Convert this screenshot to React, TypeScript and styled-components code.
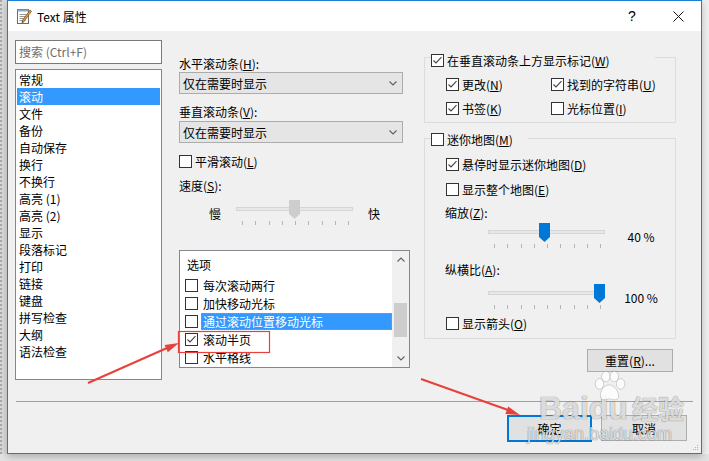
import React from 'react';
import styled, { createGlobalStyle } from 'styled-components';

const GlobalStyle = createGlobalStyle`
  html, body {
    margin: 0;
    padding: 0;
  }
  body {
    background: #e3e3e3;
    font-family: 'Noto Sans CJK SC', 'Noto Sans', sans-serif;
    font-size: 12px;
    color: #000;
    overflow: hidden;
  }
`;

const Screen = styled.div`
  position: relative;
  width: 709px;
  height: 461px;
  display: flex;
  align-items: flex-start;
  background: #e2e2e2;
  overflow: hidden;
`;

const SideStrip = styled.div<{ $right?: boolean }>`
  width: 7px;
  height: 454px;
  flex: none;
  box-sizing: border-box;
  background: ${(p) => (p.$right ? '#eeeeee' : '#d9d9d9')};
  border-left: ${(p) => (p.$right ? 'none' : '2px dotted #a8a8a8')};
`;

const Window = styled.div`
  position: relative;
  width: 695px;
  height: 454px;
  flex: none;
  box-sizing: border-box;
  border: 1px solid #1a7fd5;
  background: #f0f0f0;
  display: flex;
  flex-direction: column;
  box-shadow: 0 3px 7px rgba(0, 0, 0, 0.22);
  overflow: hidden;
`;

const TitleBar = styled.div`
  height: 30px;
  flex: none;
  background: #fff;
  display: flex;
  align-items: center;
`;

const TitleIcon = styled.svg`
  margin-left: 8px;
  flex: none;
`;

const TitleText = styled.div`
  margin-left: 5px;
  font-size: 12px;
  line-height: 17px;
  flex: 1;
`;

const TitleButton = styled.div`
  width: 46px;
  height: 30px;
  display: flex;
  align-items: center;
  justify-content: center;
  font-size: 14px;
  font-family: 'Liberation Sans', sans-serif;
`;

const Main = styled.div`
  height: 370px;
  box-sizing: border-box;
  padding: 9px 0 0 7px;
  display: flex;
  align-items: flex-start;
`;

const LeftCol = styled.div`
  width: 147px;
  flex: none;
  display: flex;
  flex-direction: column;
`;

const MidCol = styled.div`
  width: 231px;
  margin-left: 17px;
  flex: none;
  display: flex;
  flex-direction: column;
`;

const RightCol = styled.div`
  width: 252px;
  margin-left: 14px;
  flex: none;
  display: flex;
  flex-direction: column;
`;

const SearchBox = styled.div`
  height: 24px;
  box-sizing: border-box;
  border: 1px solid #7a7a7a;
  background: #fff;
  color: #6d6d6d;
  padding-left: 3px;
  line-height: 21px;
`;

const PageList = styled.div`
  margin-top: 5px;
  height: 311px;
  box-sizing: border-box;
  border: 1px solid #828790;
  background: #fff;
  padding: 1px;
`;

const PageItem = styled.div<{ $sel?: boolean }>`
  height: 17px;
  line-height: 17px;
  padding-left: 2px;
  background: ${(p) => (p.$sel ? '#3399ff' : 'transparent')};
  color: ${(p) => (p.$sel ? '#fff' : '#000')};
`;

const Label = styled.div<{ $mt?: number; $ml?: number }>`
  margin-top: ${(p) => p.$mt ?? 0}px;
  margin-left: ${(p) => p.$ml ?? 0}px;
  line-height: 17px;
  height: 17px;
  white-space: nowrap;
`;

const Key = styled.span`
  text-decoration: underline;
  text-underline-offset: 1px;
`;

const Combo = styled.div<{ $mt?: number }>`
  margin-top: ${(p) => p.$mt ?? 0}px;
  width: 224px;
  height: 22px;
  box-sizing: border-box;
  border: 1px solid #acacac;
  background: #e5e5e5;
  padding: 0 5px 0 3px;
  display: flex;
  align-items: center;
  justify-content: space-between;
`;

const CheckRow = styled.div<{ $mt?: number; $ml?: number }>`
  margin-top: ${(p) => p.$mt ?? 0}px;
  margin-left: ${(p) => p.$ml ?? 0}px;
  height: 17px;
  display: flex;
  align-items: center;
  gap: 3px;
  white-space: nowrap;
`;

const CheckBox = styled.span`
  width: 13px;
  height: 13px;
  flex: none;
  box-sizing: border-box;
  border: 1px solid #333;
  background: #fff;
  display: inline-flex;
  align-items: center;
  justify-content: center;
`;

const SliderRow = styled.div<{ $mt?: number; $ml?: number }>`
  margin-top: ${(p) => p.$mt ?? 0}px;
  margin-left: ${(p) => p.$ml ?? 0}px;
  height: 26px;
  display: flex;
  align-items: center;
`;

const SliderEnd = styled.span<{ $gap: number }>`
  line-height: 17px;
  margin: 0 ${(p) => p.$gap}px;
`;

const SliderBox = styled.div`
  position: relative;
  width: 117px;
  height: 26px;
  flex: none;
`;

const Track = styled.div`
  position: absolute;
  left: 0;
  right: 0;
  top: 7px;
  height: 4px;
  box-sizing: border-box;
  border: 1px solid #d6d6d6;
  background: #e7e7e7;
`;

const Thumb = styled.div<{ $blue?: boolean }>`
  position: absolute;
  top: 0;
  width: 11px;
  height: 19px;
  background: ${(p) => (p.$blue ? '#0078d7' : '#cdcdcd')};
  clip-path: polygon(0 0, 100% 0, 100% 74%, 50% 100%, 0 74%);
`;

const Ticks = styled.div`
  position: absolute;
  left: 0;
  right: 0;
  top: 21px;
  height: 4px;
  box-sizing: border-box;
  padding: 0 4px 0 6px;
  display: flex;
  justify-content: space-between;
`;

const Tick = styled.span`
  width: 1px;
  height: 4px;
  background: #b4b4b4;
`;

const SliderValue = styled.span`
  width: 50px;
  margin-left: 11px;
  text-align: center;
  line-height: 17px;
`;

const OptionsBox = styled.div`
  margin-top: 24px;
  width: 231px;
  height: 118px;
  box-sizing: border-box;
  border: 1px solid #828790;
  background: #fff;
  display: flex;
`;

const OptionsBody = styled.div`
  flex: 1;
  display: flex;
  flex-direction: column;
`;

const OptionsHeader = styled.div`
  margin: 5px 0 3px 7px;
  line-height: 17px;
`;

const OptionRow = styled.div`
  height: 18px;
  display: flex;
  align-items: center;
  padding-left: 5px;
`;

const OptionText = styled.span<{ $sel?: boolean }>`
  flex: 1;
  margin-left: 3px;
  padding-left: 2px;
  height: 17px;
  line-height: 17px;
  white-space: nowrap;
  background: ${(p) => (p.$sel ? '#3399ff' : 'transparent')};
  color: ${(p) => (p.$sel ? '#fff' : '#000')};
  outline: ${(p) => (p.$sel ? '1px dotted #e58b1c' : 'none')};
  outline-offset: -1px;
`;

const ScrollBar = styled.div`
  width: 17px;
  flex: none;
  background: #f0f0f0;
  display: flex;
  flex-direction: column;
`;

const ScrollArrow = styled.div`
  height: 17px;
  display: flex;
  align-items: center;
  justify-content: center;
`;

const ScrollTrack = styled.div`
  flex: 1;
`;

const ScrollThumb = styled.div`
  margin: 35px 2px 0;
  height: 34px;
  background: #cdcdcd;
`;

const Group = styled.fieldset<{ $mt: number; $pb: number }>`
  margin: ${(p) => p.$mt}px 0 0;
  padding: 0 0 ${(p) => p.$pb}px;
  min-width: 0;
  width: 100%;
  box-sizing: border-box;
  border: 1px solid #dcdcdc;
  display: flex;
  flex-direction: column;
`;

const GroupHeader = styled.legend<{ $w: number; $pt: number }>`
  margin-left: 6px;
  padding: ${(p) => p.$pt}px 0 0;
  width: ${(p) => p.$w}px;
  box-sizing: border-box;
  height: ${(p) => p.$pt + 17}px;
  display: flex;
  align-items: center;
  gap: 3px;
  white-space: nowrap;
`;

const MarkGrid = styled.div`
  margin: 7px 0 0 21px;
  display: grid;
  grid-template-columns: 105px auto;
  row-gap: 7px;
`;

const Button = styled.div<{ $primary?: boolean; $w?: number }>`
  width: ${(p) => p.$w ?? 85}px;
  height: ${(p) => (p.$primary ? 27 : 26)}px;
  box-sizing: border-box;
  background: #e1e1e1;
  border: ${(p) => (p.$primary ? '2px solid #0078d7' : '1px solid #adadad')};
  display: flex;
  align-items: center;
  justify-content: center;
  line-height: 17px;
`;

const ResetButton = styled(Button)`
  height: 23px;
  margin-top: 10px;
  align-self: flex-end;
  margin-right: 3px;
`;

const Separator = styled.div`
  height: 1px;
  margin: 0 8px;
  background: #a0a0a0;
  flex: none;
`;

const Footer = styled.div`
  display: flex;
  justify-content: flex-end;
  gap: 9px;
  padding: 13px 14px 0 0;
`;

const Grip = styled.svg`
  position: absolute;
  right: 2px;
  bottom: 2px;
`;

const Overlay = styled.svg`
  position: absolute;
  left: 0;
  top: 0;
  pointer-events: none;
`;

const Watermark = styled.div`
  position: absolute;
  left: 527px;
  top: 378px;
  width: 175px;
  color: rgba(255, 255, 255, 0.8);
  text-shadow: 0 0 1px rgba(0, 0, 0, 0.45), 0 0 1px rgba(0, 0, 0, 0.3);
  pointer-events: none;
  display: flex;
  flex-direction: column;
`;

const WmTop = styled.div`
  display: flex;
  align-items: flex-end;
  padding-left: 12px;
  height: 46px;
`;

const WmBaidu = styled.span`
  font-family: 'Liberation Sans', sans-serif;
  font-weight: bold;
  font-size: 32px;
  line-height: 32px;
  position: relative;
`;

const WmJy = styled.span`
  font-family: 'Noto Sans CJK SC', sans-serif;
  font-weight: bold;
  font-size: 26px;
  line-height: 32px;
  margin-left: 4px;
`;

const WmUrl = styled.span`
  font-family: 'Liberation Sans', sans-serif;
  font-size: 18px;
  line-height: 20px;
`;

const Chevron = ({ up }: { up?: boolean }) => (
  <svg width="8" height="5" viewBox="0 0 8 5">
    <path
      d={up ? 'M0.5 4.5 L4 1 L7.5 4.5' : 'M0.5 0.5 L4 4 L7.5 0.5'}
      fill="none"
      stroke="#606060"
      strokeWidth="1.1"
    />
  </svg>
);

const Check = ({ on }: { on?: boolean }) => (
  <CheckBox>
    {on && (
      <svg width="11" height="11" viewBox="0 0 11 11">
        <path d="M1.5 5.5 L4 8 L9.5 2.2" fill="none" stroke="#444" strokeWidth="1.1" />
      </svg>
    )}
  </CheckBox>
);

const Slider = ({ value, blue }: { value: number; blue?: boolean }) => (
  <SliderBox>
    <Track />
    <Thumb $blue={blue} style={{ left: Math.round(value * 106) }} />
    <Ticks>
      {Array.from({ length: 9 }).map((_, i) => (
        <Tick key={i} />
      ))}
    </Ticks>
  </SliderBox>
);

const pages = [
  '常规',
  '滚动',
  '文件',
  '备份',
  '自动保存',
  '换行',
  '不换行',
  '高亮 (1)',
  '高亮 (2)',
  '显示',
  '段落标记',
  '打印',
  '链接',
  '键盘',
  '拼写检查',
  '大纲',
  '语法检查',
];

const options = [
  { text: '每次滚动两行', on: false },
  { text: '加快移动光标', on: false },
  { text: '通过滚动位置移动光标', on: false, sel: true },
  { text: '滚动半页', on: true },
  { text: '水平格线', on: false },
];

const App = () => {
  return (
    <>
      <GlobalStyle />
      <Screen>
        <SideStrip />
        <Window>
          <TitleBar>
            <TitleIcon width="16" height="18" viewBox="0 0 16 18">
              <rect x="1.5" y="2.5" width="11" height="14" fill="#fff" stroke="#6b6b6b" />
              <rect x="1.5" y="2.5" width="11" height="2" fill="#8aa8c8" />
              <path d="M3.5 7.5h7M3.5 9.5h7M3.5 11.5h5M3.5 13.5h6" stroke="#9a9a9a" />
              <path d="M6 14 L14 3 L15.5 4.2 L7.5 15.2 Z" fill="#e09a3a" stroke="#7a4a10" strokeWidth="0.7" />
              <path d="M6 14 L5.6 16 L7.5 15.2 Z" fill="#333" />
            </TitleIcon>
            <TitleText>Text 属性</TitleText>
            <TitleButton>?</TitleButton>
            <TitleButton>
              <svg width="11" height="11" viewBox="0 0 11 11">
                <path d="M0.5 0.5 L10.5 10.5 M10.5 0.5 L0.5 10.5" stroke="#111" strokeWidth="1" />
              </svg>
            </TitleButton>
          </TitleBar>

          <Main>
            <LeftCol>
              <SearchBox>搜索 (Ctrl+F)</SearchBox>
              <PageList>
                {pages.map((p) => (
                  <PageItem key={p} $sel={p === '滚动'}>
                    {p}
                  </PageItem>
                ))}
              </PageList>
            </LeftCol>

            <MidCol>
              <Label $mt={15}>
                水平滚动条(<Key>H</Key>):
              </Label>
              <Combo>
                <span>仅在需要时显示</span>
                <Chevron />
              </Combo>
              <Label $mt={9}>
                垂直滚动条(<Key>V</Key>):
              </Label>
              <Combo $mt={1}>
                <span>仅在需要时显示</span>
                <Chevron />
              </Combo>
              <CheckRow $mt={10}>
                <Check />
                <span>
                  平滑滚动(<Key>L</Key>)
                </span>
              </CheckRow>
              <Label $mt={7}>
                速度(<Key>S</Key>):
              </Label>
              <SliderRow $mt={6} $ml={30}>
                <span>慢</span>
                <SliderEnd $gap={15}>
                  <Slider value={0.5} />
                </SliderEnd>
                <span>快</span>
              </SliderRow>
              <OptionsBox>
                <OptionsBody>
                  <OptionsHeader>选项</OptionsHeader>
                  {options.map((o) => (
                    <OptionRow key={o.text}>
                      <Check on={o.on} />
                      <OptionText $sel={o.sel}>{o.text}</OptionText>
                    </OptionRow>
                  ))}
                </OptionsBody>
                <ScrollBar>
                  <ScrollArrow>
                    <Chevron up />
                  </ScrollArrow>
                  <ScrollTrack>
                    <ScrollThumb />
                  </ScrollTrack>
                  <ScrollArrow>
                    <Chevron />
                  </ScrollArrow>
                </ScrollBar>
              </OptionsBox>
            </MidCol>

            <RightCol>
              <Group $mt={6} $pb={5}>
                <GroupHeader $w={224} $pt={6}>
                  <Check on />
                  <span>
                    在垂直滚动条上方显示标记(<Key>W</Key>)
                  </span>
                </GroupHeader>
                <MarkGrid>
                  <CheckRow>
                    <Check on />
                    <span>
                      更改(<Key>N</Key>)
                    </span>
                  </CheckRow>
                  <CheckRow>
                    <Check on />
                    <span>
                      找到的字符串(<Key>U</Key>)
                    </span>
                  </CheckRow>
                  <CheckRow>
                    <Check on />
                    <span>
                      书签(<Key>K</Key>)
                    </span>
                  </CheckRow>
                  <CheckRow>
                    <Check />
                    <span>
                      光标位置(<Key>I</Key>)
                    </span>
                  </CheckRow>
                </MarkGrid>
              </Group>

              <Group $mt={6} $pb={6}>
                <GroupHeader $w={97} $pt={2}>
                  <Check />
                  <span>
                    迷你地图(<Key>M</Key>)
                  </span>
                </GroupHeader>
                <CheckRow $mt={8} $ml={21}>
                  <Check on />
                  <span>
                    悬停时显示迷你地图(<Key>D</Key>)
                  </span>
                </CheckRow>
                <CheckRow $mt={8} $ml={21}>
                  <Check />
                  <span>
                    显示整个地图(<Key>E</Key>)
                  </span>
                </CheckRow>
                <Label $mt={6} $ml={20}>
                  缩放(<Key>Z</Key>):
                </Label>
                <SliderRow $mt={2} $ml={63}>
                  <Slider value={0.48} blue />
                  <SliderValue>40 %</SliderValue>
                </SliderRow>
                <Label $mt={12} $ml={20}>
                  纵横比(<Key>A</Key>):
                </Label>
                <SliderRow $mt={6} $ml={63}>
                  <Slider value={1} blue />
                  <SliderValue>100 %</SliderValue>
                </SliderRow>
                <CheckRow $mt={5} $ml={21}>
                  <Check />
                  <span>
                    显示箭头(<Key>O</Key>)
                  </span>
                </CheckRow>
              </Group>

              <ResetButton $w={86}>
                重置(<Key>R</Key>)...
              </ResetButton>
            </RightCol>
          </Main>

          <Separator />
          <Footer>
            <Button $primary>确定</Button>
            <Button $w={86}>取消</Button>
          </Footer>

          <Grip width="7" height="7" viewBox="0 0 7 7">
            <path d="M5 1h1v1H5zM3 3h1v1H3zM5 3h1v1H5zM1 5h1v1H1zM3 5h1v1H3zM5 5h1v1H5z" fill="#b0b0b0" />
          </Grip>
        </Window>
        <SideStrip $right />

        <Watermark>
          <WmTop>
            <WmBaidu>
              Baidu
              <svg
                width="36"
                height="32"
                viewBox="0 0 34 30"
                style={{ position: 'absolute', left: 52, top: -22 }}
              >
                <g fill="rgba(255,255,255,0.8)" stroke="rgba(0,0,0,0.25)" strokeWidth="0.6">
                  <ellipse cx="8" cy="13" rx="4" ry="5" />
                  <ellipse cx="14" cy="6" rx="4" ry="5" />
                  <ellipse cx="22" cy="6" rx="4" ry="5" />
                  <ellipse cx="28" cy="13" rx="4" ry="5" />
                  <path d="M17 14 C11 14 8 22 9 26 C10 29 14 28 17 27 C20 28 25 29 26 26 C27 22 23 14 17 14 Z" />
                </g>
              </svg>
            </WmBaidu>
            <WmJy>经验</WmJy>
          </WmTop>
          <WmUrl>jingyan.baidu.com</WmUrl>
        </Watermark>

        <Overlay width="709" height="461" viewBox="0 0 709 461">
          <rect x="178.5" y="331.5" width="91" height="21" fill="none" stroke="#e8403a" strokeWidth="1.2" />
          <line x1="88" y1="383" x2="167" y2="348" stroke="#e8403a" strokeWidth="2" />
          <polygon points="179,343 167.8,352.3 164.6,344.9" fill="#e8403a" />
          <line x1="421" y1="379" x2="508" y2="410" stroke="#e8403a" strokeWidth="2" />
          <polygon points="520,415 505.4,414 508.2,406.4" fill="#e8403a" />
        </Overlay>
      </Screen>
    </>
  );
};

export default App;
